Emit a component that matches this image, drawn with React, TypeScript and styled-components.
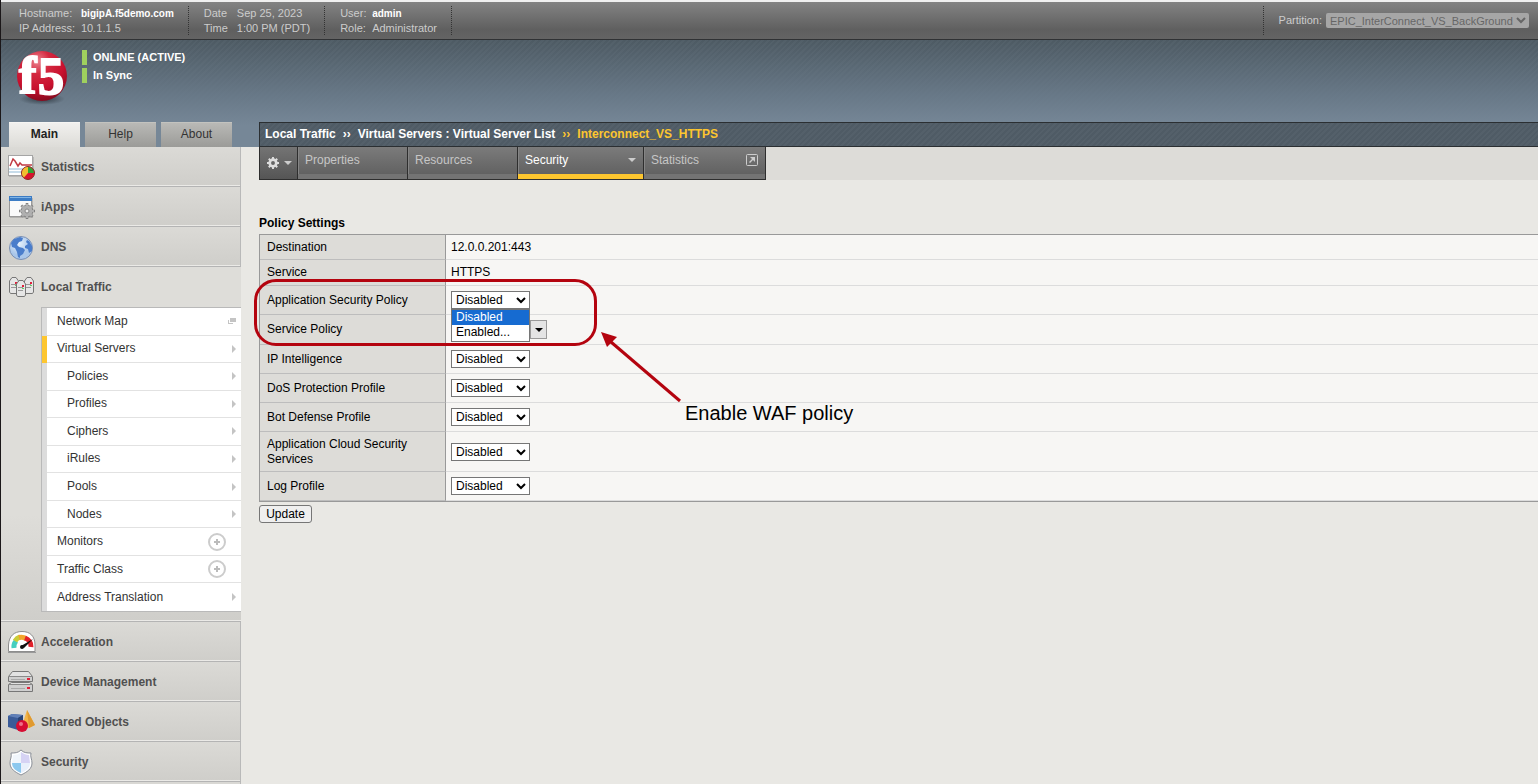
import React, { ReactNode } from "react";
import styled, { createGlobalStyle } from "styled-components";

const GlobalStyle = createGlobalStyle`
  *, *::before, *::after { box-sizing: border-box; }
  html, body { margin: 0; padding: 0; }
  body { font-family: "Liberation Sans", Arial, sans-serif; font-size: 12px; line-height: 15px; color: #000; background: #e9e8e4; }
  button, input, select { font: inherit; }
  ul { list-style: none; margin: 0; padding: 0; }
  a { color: inherit; text-decoration: none; }
`;

const Page = styled.div`
  min-height: 100vh;
  display: flex;
  flex-direction: column;
  border-left: 1px solid #1b1719;
`;

/* ---------- top bar ---------- */
const TopBar = styled.header`
  display: flex;
  align-items: center;
  height: 40px;
  border-top: 2px solid #f0f0f0;
  border-bottom: 1px solid #303234;
  background: linear-gradient(#838383, #5f5f5f 75%, #646464);
  color: #ccc;
  font-size: 11px;
`;

const InfoGroup = styled.dl<{ $left: number; $label: number }>`
  display: grid;
  grid-template-columns: ${(p) => p.$label}px auto;
  align-content: center;
  margin: 0;
  height: 29px;
  padding: 0 14px 0 ${(p) => p.$left}px;
  border-right: 1px dotted #333;
  white-space: nowrap;
  dt, dd { margin: 0; }
`;

const Strong = styled.strong`
  color: #fff;
  font-size: 10px;
`;

const PartitionBox = styled.div`
  display: flex;
  align-items: center;
  gap: 4px;
  height: 29px;
  margin-left: auto;
  padding: 0 9px 0 15px;
  border-left: 1px dotted #333;
`;

const PartitionSelect = styled.select`
  width: 203px;
  height: 15px;
  padding: 0;
  border: 0;
  border-radius: 2px;
  background: #a6a6a6;
  color: #666;
  opacity: 1;
`;

/* ---------- banner ---------- */
const Banner = styled.div`
  display: flex;
  flex-direction: column;
  height: 107px;
  background:
    linear-gradient(rgba(77, 89, 97, 0) 0, rgba(108, 125, 141, 0.85) 55px, #768797 85px),
    repeating-linear-gradient(135deg, #4d5a63 0 2px, #525f68 2px 4px);
`;

const StatusRow = styled.div`
  display: flex;
  flex: 1;
  padding: 4px 0 0 14px;
  gap: 12px;
`;

const StatusList = styled.ul`
  display: flex;
  flex-direction: column;
  gap: 3px;
  padding-top: 6px;
  color: #fff;
  font-size: 11px;
  font-weight: bold;
  li { border-left: 5px solid #9fd05e; padding-left: 6px; }
`;

const HeadRow = styled.div`
  display: flex;
  height: 25px;
`;

const SideTabs = styled.nav`
  display: flex;
  gap: 5px;
  width: 258px;
  padding-left: 8px;
`;

const SideTab = styled.button<{ $active?: boolean }>`
  width: 71px;
  padding: 0 0 2px;
  border: 0;
  border-top: 1px solid ${(p) => (p.$active ? "#f6f5f3" : "#c3c3bf")};
  background: ${(p) => (p.$active ? "linear-gradient(#f1f0ee, #dddcd8)" : "linear-gradient(#b9b9b6, #9b9b98)")};
  color: ${(p) => (p.$active ? "#222" : "#333")};
  font-weight: ${(p) => (p.$active ? "bold" : "normal")};
`;

const Breadcrumb = styled.nav`
  flex: 1;
  display: flex;
  align-items: center;
  gap: 7px;
  padding-left: 5px;
  border: 1px solid #2b2f32;
  border-right: 0;
  background: repeating-linear-gradient(135deg, #4f5b65 0 2px, #54606a 2px 4px);
  color: #fff;
  font-weight: bold;
  white-space: nowrap;
`;

const Current = styled.span`
  color: #fdc62f;
`;

/* ---------- sidebar ---------- */
const Body = styled.div`
  flex: 1;
  display: flex;
`;

const Sidebar = styled.nav`
  display: flex;
  flex-direction: column;
  width: 240px;
  flex: none;
`;

const Filler = styled.div`
  flex: 1;
  background: #d9d8d4;
  border-right: 1px solid #b9b9b9;
`;

const NavItem = styled.a`
  display: flex;
  align-items: center;
  gap: 5px;
  height: 40px;
  padding: 2px 0 0 6px;
  border-right: 1px solid #b9b9b9;
  border-bottom: 1px solid #b4b4b4;
  box-shadow: inset 0 -1px #ebeae7;
  background: linear-gradient(#dbdad6, #cfceca);
  color: #505050;
  font-weight: bold;
  svg { flex: none; }
`;

const OpenSection = styled.div`
  padding-bottom: 8px;
  background: linear-gradient(#deddd9 0 70%, #cfceca);
  border-bottom: 1px solid #b4b4b4;
  box-shadow: inset 0 -1px #ebeae7;
`;

const OpenHead = styled(NavItem)`
  padding-top: 0;
  border: 0;
  box-shadow: none;
  background: none;
`;

const SubMenu = styled.ul`
  display: grid;
  grid-auto-rows: 1fr;
  min-height: 305px;
  margin: 0 0 1px 40px;
  border: 1px solid #b9b9b9;
  border-right: 0;
  background: #fff;
`;

const SubItem = styled.li<{ $active?: boolean; $nested?: boolean }>`
  display: flex;
  border-left: 5px solid ${(p) => (p.$active ? "#fdc62f" : "#dcdcdc")};
  a {
    flex: 1;
    display: flex;
    align-items: center;
    justify-content: space-between;
    padding: 0 5px 0 ${(p) => (p.$nested ? 20 : 10)}px;
    border-bottom: 1px solid #e2e2e2;
    color: #333;
  }
  &:last-child a { border-bottom: 0; }
`;

const PlusIcon = styled.svg`
  margin-right: 9px;
`;

/* ---------- main ---------- */
const Main = styled.main`
  flex: 1;
  min-width: 0;
  padding-left: 18px;
`;

const TabBand = styled.div`
  display: flex;
  height: 33px;
  background: #dddcd8;
`;

const TabStrip = styled.div`
  display: flex;
  border-left: 1px solid #2e2e2e;
  border-bottom: 1px solid #2e2e2e;
`;

const MainTab = styled.button<{ $width: number; $active?: boolean }>`
  display: flex;
  justify-content: space-between;
  width: ${(p) => p.$width}px;
  padding: 6px 7px 0;
  border: 0;
  border-right: 1px solid #2e2e2e;
  background: linear-gradient(#7b7b7b, #5d5d5d);
  box-shadow: inset 0 -5px ${(p) => (p.$active ? "#fdc62f" : "#747474")}, inset 1px 0 #858585;
  color: ${(p) => (p.$active ? "#fff" : "#c6c6c6")};
  line-height: 15px;
  svg { flex: none; }
`;

const GearTab = styled.button`
  display: flex;
  align-items: center;
  gap: 5px;
  width: 38px;
  padding: 0 5px 0 6px;
  border: 0;
  border-right: 1px solid #2e2e2e;
  background: linear-gradient(#747474, #555);
`;

const SectionTitle = styled.h2`
  margin: 36px 0 3px;
  font-size: 12px;
  line-height: 15px;
`;

const TableArea = styled.div`
  position: relative;
`;

const SettingsTable = styled.table`
  width: 100%;
  border-spacing: 0;
  border-top: 1px solid #999;
  border-left: 1px solid #999;
  border-bottom: 1px solid #999;
  background: #f7f6f4;
`;

const Row = styled.tr<{ $height: number }>`
  height: ${(p) => p.$height}px;
  th {
    width: 186px;
    padding: 0 30px 0 7px;
    border-right: 1px solid #999;
    border-bottom: 1px solid #bdbdbd;
    background: #dddcd8;
    font-weight: normal;
    text-align: left;
  }
  td {
    padding: 0 5px;
    border-bottom: 1px solid #dcdcdc;
  }
`;

const Control = styled.div`
  position: relative;
  display: flex;
  align-items: center;
`;

const Select = styled.select`
  width: 79px;
  height: 18px;
  padding: 0;
  border: 1px solid #767676;
  border-radius: 0;
  background: #fff;
  color: #000;
`;

const OptionList = styled.ul`
  position: absolute;
  z-index: 1;
  top: 17px;
  left: 0;
  width: 79px;
  height: 34px;
  border: 1px solid #767676;
  border-top-width: 2px;
  background: #fff;
`;

const Option = styled.li<{ $selected?: boolean }>`
  padding-left: 4px;
  background: ${(p) => (p.$selected ? "#166bd1" : "#fff")};
  color: ${(p) => (p.$selected ? "#fff" : "#000")};
`;

const PolicyInput = styled.input`
  width: 79px;
  height: 18px;
  border: 1px solid #767676;
`;

const ComboButton = styled.button`
  display: flex;
  align-items: center;
  justify-content: center;
  width: 17px;
  height: 19px;
  padding: 0;
  border: 1px solid #999;
  background: #e4e4e4;
`;

const UpdateButton = styled.button`
  display: block;
  width: 53px;
  height: 18px;
  margin-top: 3px;
  padding: 0;
  border: 1px solid #767676;
  border-radius: 3px;
  background: #efefef;
  color: #000;
`;

const Highlight = styled.div`
  position: absolute;
  z-index: 2;
  top: 45px;
  left: -5px;
  width: 343px;
  height: 67px;
  border: 3px solid #b4040f;
  border-radius: 22px;
  pointer-events: none;
`;

const Arrow = styled.svg`
  position: absolute;
  top: 96px;
  left: 340px;
`;

const Note = styled.p`
  position: absolute;
  top: 167px;
  left: 426px;
  margin: 0;
  font-size: 20px;
  line-height: 24px;
  white-space: nowrap;
`;

/* ---------- drawings ---------- */
const Logo = () => (
  <svg width="55" height="72" viewBox="0 -6 55 72" role="img" aria-label="f5">
    <defs>
      <radialGradient id="ball" cx="0.4" cy="0.2" r="0.85">
        <stop offset="0" stopColor="#eb8590" />
        <stop offset="0.3" stopColor="#d4283f" />
        <stop offset="0.65" stopColor="#c8102e" />
        <stop offset="1" stopColor="#7d0a1c" />
      </radialGradient>
      <radialGradient id="shade">
        <stop offset="0" stopColor="#222b33" stopOpacity="0.8" />
        <stop offset="1" stopColor="#222b33" stopOpacity="0" />
      </radialGradient>
    </defs>
    <ellipse cx="27" cy="49" rx="23" ry="6" fill="url(#shade)" />
    <circle cx="27" cy="26" r="25" fill="url(#ball)" />
    <g fill="#fff" stroke="#fff" strokeWidth="2" fontFamily="Liberation Serif, serif" fontWeight="bold">
      <text x="4" y="43" fontSize="52">f</text>
      <text x="23" y="44" fontSize="52">5</text>
    </g>
  </svg>
);

const Ico = ({ children }: { children: ReactNode }) => (
  <svg width="29" height="30" viewBox="0 0 29 30" aria-hidden="true">{children}</svg>
);

const StatisticsIcon = () => (
  <Ico>
    <rect x="2" y="4" width="25" height="20" fill="#999" opacity="0.5" />
    <rect x="1.500" y="2.500" width="24" height="20" fill="#fff" stroke="#a5a5a5" />
    <path d="M2 16h23M2 19h23" stroke="#c7dcea" strokeWidth="2" />
    <path d="M3 13l3-7 2 2 3 5 2-3 2 2h10" fill="none" stroke="#c13a43" strokeWidth="1.500" />
    <circle cx="21" cy="20" r="6.500" fill="#d8142e" stroke="#8a2a20" />
    <path d="M21 20V14a6 6 0 0 0-4 10.500z" fill="#f0c030" />
    <path d="M21 20V14a6 6 0 0 1 6 6z" fill="#2fa535" />
  </Ico>
);

const GearShape = ({ x, y, r, fill }: { x: number; y: number; r: number; fill: string }) => (
  <g transform={`translate(${x} ${y})`}>
    <circle r={r * 0.55} fill="none" stroke={fill} strokeWidth={r * 0.45} />
    {[0, 45, 90, 135].map((a) => (
      <path key={a} transform={`rotate(${a})`} d={`M0 ${-r}V${-r * 0.6}M0 ${r * 0.6}V${r}`} stroke={fill} strokeWidth={r * 0.32} />
    ))}
  </g>
);

const AppsIcon = () => (
  <Ico>
    <rect x="3" y="5" width="23" height="20" fill="#888" opacity="0.4" />
    <rect x="2.500" y="3.500" width="22" height="20" fill="#fafafa" stroke="#999" />
    <path d="M2 3h23v5H2z" fill="#3c7cc4" />
    <path d="M3 4h21v1H3z" fill="#7fb4e6" />
    <GearShape x={20} y={18} r={8} fill="#808080" />
    <circle cx="20" cy="18" r="5" fill="#b4b4b4" />
    <GearShape x={20} y={18} r={7} fill="#b0b0b0" />
    <circle cx="20" cy="18" r="2" fill="#eee" stroke="#888" />
  </Ico>
);

const DnsIcon = () => (
  <Ico>
    <defs>
      <radialGradient id="globe" cx="0.4" cy="0.3"><stop offset="0" stopColor="#e9f3fd" /><stop offset="1" stopColor="#a9c6ea" /></radialGradient>
    </defs>
    <circle cx="14" cy="15" r="11.500" fill="url(#globe)" stroke="#7a8fb3" />
    <path d="M4 10l3-4 6-2 3 1-1 3-3 1-2 3 2 2 4 1 2 2-2 4-3 2v2l-2-1-1-5-2-4-3-1z" fill="#4a7dcb" />
    <path d="M20 7l2 1 3 5v5l-3 2-1-4-3-1v-2l3-2-2-2z" fill="#4a7dcb" />
  </Ico>
);

const Tower = ({ x, y }: { x: number; y: number }) => (
  <g transform={`translate(${x} ${y})`}>
    <path d="M.5 4L3 .5h4L9.500 4v11l-1 1.500h-7l-1-1.500z" fill="#e6e6e6" stroke="#777" />
    <path d="M2 7.500h5M2 10.500h5" stroke="#999" />
    <path d="M6 5h2v2H6z" fill="#e0203a" />
    <path d="M6 8h2v1H6z" fill="#6c6" />
  </g>
);

const TrafficIcon = () => (
  <Ico>
    <Tower x={2} y={5} />
    <Tower x={17} y={5} />
    <Tower x={9} y={8} />
  </Ico>
);

const AccelIcon = () => (
  <Ico>
    <path d="M1 24.500h28" stroke="#999" />
    <path d="M1.500 23.500V17C2 8 7 3.500 15 3.500s13 4.500 13 13.500v6.500z" fill="#fff" stroke="#8d8d8d" />
    <path d="M7 20a9 9 0 0 1 2-7" fill="none" stroke="#45cfc0" strokeWidth="5" />
    <path d="M8 13a9 9 0 0 1 5-4" fill="none" stroke="#c9cc3a" strokeWidth="5" />
    <path d="M12 9.500a9 9 0 0 1 7 1" fill="none" stroke="#f2a52c" strokeWidth="5" />
    <path d="M18 10a9 9 0 0 1 6 9" fill="none" stroke="#e0222c" strokeWidth="5" />
    <path d="M26 11L17 20l-3-2z" fill="#111" />
    <circle cx="15" cy="19" r="2" fill="#111" />
  </Ico>
);

const DeviceIcon = () => (
  <Ico>
    <path d="M1.500 8.500l4-5h16l4 5v5h-24z" fill="#e2e2e2" stroke="#777" />
    <path d="M1.500 16.500l3-2h18l3 2v7h-24z" fill="#e2e2e2" stroke="#777" />
    <path d="M2 9h23v4H2zM2 17h23v6H2z" fill="#cfcfcf" />
    <path d="M2 8.500h23M2 16.500h23" stroke="#8a8a8a" />
    <path d="M4 11.500h14M4 20.500h14" stroke="#aaa" />
    <path d="M20 10h3v2h-3zM20 19h3v2h-3z" fill="#e0203a" />
  </Ico>
);

const ObjectsIcon = () => (
  <Ico>
    <path d="M1 8l4-2 11 1v12l-5 3-10-3z" fill="#3a5b98" />
    <path d="M1 8l4-2 11 1-5 3z" fill="#6180b8" />
    <path d="M11 10l5-3v12l-5 3z" fill="#284376" />
    <path d="M20 2l8 15-6 3-7-2z" fill="#f3b548" />
    <path d="M20 2l8 15-6 3z" fill="#e09a30" />
    <circle cx="15" cy="18" r="6" fill="#d60d32" />
    <circle cx="14" cy="16" r="2" fill="#ee7088" />
  </Ico>
);

const ShieldIcon = () => (
  <Ico>
    <path d="M14 2c3 3 6 3 10 3-1 4 1 6 1 10 0 6-5 9-11 12C8 24 3 21 3 15c0-4 2-6 1-10 4 0 7 0 10-3z" fill="#fff" stroke="#8a8f98" />
    <path d="M14 4c3 2 5 3 8 3l1 8h-9z" fill="#d6d3f4" />
    <path d="M5 15h9v10c-5-2-9-5-9-10z" fill="#8cc8ee" />
    <path d="M14 15h9c0 5-4 8-9 10z" fill="#e9f0fb" />
    <path d="M6 7c4 0 6-1 8-3v11H5z" fill="#f0f5fb" />
  </Ico>
);

const Chevron = () => (
  <svg width="5" height="8" aria-hidden="true"><path d="M1 0l4 4-4 4z" fill="#c4c4c4" /></svg>
);
const WindowMark = () => (
  <svg width="8" height="6" aria-hidden="true"><path d="M2 0h6v4H2z M0 2h1v3h4v1H0z" fill="#c4c4c4" /></svg>
);
const Plus = () => (
  <PlusIcon width="20" height="20" viewBox="0 0 20 20" aria-hidden="true">
    <circle cx="10" cy="10" r="8" fill="none" stroke="#ccc" strokeWidth="2" />
    <path d="M7 10h6M10 7v6" stroke="#bbb" strokeWidth="2" />
  </PlusIcon>
);
const Down = ({ color }: { color: string }) => (
  <svg width="8" height="4" aria-hidden="true"><path d="M0 0h8L4 4z" fill={color} /></svg>
);

/* ---------- data ---------- */
type SubEntry = { label: string; nested?: boolean; active?: boolean; mark?: "window" | "plus" };

const subMenu: SubEntry[] = [
  { label: "Network Map", mark: "window" },
  { label: "Virtual Servers", active: true },
  { label: "Policies", nested: true },
  { label: "Profiles", nested: true },
  { label: "Ciphers", nested: true },
  { label: "iRules", nested: true },
  { label: "Pools", nested: true },
  { label: "Nodes", nested: true },
  { label: "Monitors", mark: "plus" },
  { label: "Traffic Class", mark: "plus" },
  { label: "Address Translation" },
];

const selectRows = [
  { id: "ip", label: "IP Intelligence", height: 29 },
  { id: "dos", label: "DoS Protection Profile", height: 29 },
  { id: "bot", label: "Bot Defense Profile", height: 29 },
  { id: "cloud", label: "Application Cloud Security Services", height: 40 },
  { id: "log", label: "Log Profile", height: 29 },
];

const DisabledSelect = ({ id }: { id: string }) => (
  <Select id={id} defaultValue="Disabled">
    <option>Disabled</option>
    <option>Enabled...</option>
  </Select>
);

export default function App() {
  return (
    <Page>
      <GlobalStyle />
      <TopBar>
        <InfoGroup $left={18} $label={62}>
          <dt>Hostname:</dt><dd><Strong>bigipA.f5demo.com</Strong></dd>
          <dt>IP Address:</dt><dd>10.1.1.5</dd>
        </InfoGroup>
        <InfoGroup $left={15} $label={33}>
          <dt>Date</dt><dd>Sep 25, 2023</dd>
          <dt>Time</dt><dd>1:00 PM (PDT)</dd>
        </InfoGroup>
        <InfoGroup $left={15} $label={32}>
          <dt>User:</dt><dd><Strong>admin</Strong></dd>
          <dt>Role:</dt><dd>Administrator</dd>
        </InfoGroup>
        <PartitionBox>
          <label htmlFor="partition">Partition:</label>
          <PartitionSelect id="partition" disabled>
            <option>EPIC_InterConnect_VS_BackGround</option>
          </PartitionSelect>
        </PartitionBox>
      </TopBar>

      <Banner>
        <StatusRow>
          <Logo />
          <StatusList>
            <li>ONLINE (ACTIVE)</li>
            <li>In Sync</li>
          </StatusList>
        </StatusRow>
        <HeadRow>
          <SideTabs>
            <SideTab $active>Main</SideTab>
            <SideTab>Help</SideTab>
            <SideTab>About</SideTab>
          </SideTabs>
          <Breadcrumb>
            <a href="#traffic">Local Traffic</a>
            <span>››</span>
            <a href="#servers">Virtual Servers : Virtual Server List</a>
            <Current>››</Current>
            <Current>Interconnect_VS_HTTPS</Current>
          </Breadcrumb>
        </HeadRow>
      </Banner>

      <Body>
        <Sidebar>
          <NavItem href="#statistics"><StatisticsIcon />Statistics</NavItem>
          <NavItem href="#iapps"><AppsIcon />iApps</NavItem>
          <NavItem href="#dns"><DnsIcon />DNS</NavItem>
          <OpenSection>
            <OpenHead href="#traffic"><TrafficIcon />Local Traffic</OpenHead>
            <SubMenu>
              {subMenu.map((s) => (
                <SubItem key={s.label} $active={s.active} $nested={s.nested}>
                  <a href="#item">
                    {s.label}
                    {s.mark === "plus" ? <Plus /> : s.mark === "window" ? <WindowMark /> : <Chevron />}
                  </a>
                </SubItem>
              ))}
            </SubMenu>
          </OpenSection>
          <NavItem href="#acceleration"><AccelIcon />Acceleration</NavItem>
          <NavItem href="#devices"><DeviceIcon />Device Management</NavItem>
          <NavItem href="#objects"><ObjectsIcon />Shared Objects</NavItem>
          <NavItem href="#security"><ShieldIcon />Security</NavItem>
          <Filler />
        </Sidebar>

        <Main>
          <TabBand>
            <TabStrip>
              <GearTab aria-label="Options">
                <svg width="14" height="14" aria-hidden="true"><GearShape x={7} y={7} r={6} fill="#ddd" /></svg>
                <Down color="#ccc" />
              </GearTab>
              <MainTab $width={110}>Properties</MainTab>
              <MainTab $width={110}>Resources</MainTab>
              <MainTab $width={126} $active>
                Security
                <svg width="8" height="15" aria-hidden="true"><path d="M0 5h8l-4 4z" fill="#ccc" /></svg>
              </MainTab>
              <MainTab $width={122}>
                Statistics
                <svg width="12" height="15" viewBox="0 0 12 15" aria-hidden="true">
                  <rect x="0.500" y="1.500" width="11" height="11" rx="1" fill="none" stroke="#ccc" />
                  <path d="M4 4h5v5L7 7l-3 3-1-1 3-3z" fill="#ccc" />
                </svg>
              </MainTab>
            </TabStrip>
          </TabBand>

          <SectionTitle>Policy Settings</SectionTitle>
          <TableArea>
            <SettingsTable>
              <tbody>
                <Row $height={25}><th scope="row">Destination</th><td>12.0.0.201:443</td></Row>
                <Row $height={26}><th scope="row">Service</th><td>HTTPS</td></Row>
                <Row $height={29}>
                  <th scope="row"><label htmlFor="asp">Application Security Policy</label></th>
                  <td>
                    <Control>
                      <DisabledSelect id="asp" />
                      <OptionList role="listbox" aria-label="Application Security Policy">
                        <Option role="option" aria-selected $selected>Disabled</Option>
                        <Option role="option" aria-selected={false}>Enabled...</Option>
                      </OptionList>
                    </Control>
                  </td>
                </Row>
                <Row $height={30}>
                  <th scope="row"><label htmlFor="service-policy">Service Policy</label></th>
                  <td>
                    <Control>
                      <PolicyInput id="service-policy" />
                      <ComboButton aria-label="Choose service policy"><Down color="#000" /></ComboButton>
                    </Control>
                  </td>
                </Row>
                {selectRows.map((r) => (
                  <Row key={r.id} $height={r.height}>
                    <th scope="row"><label htmlFor={r.id}>{r.label}</label></th>
                    <td><Control><DisabledSelect id={r.id} /></Control></td>
                  </Row>
                ))}
              </tbody>
            </SettingsTable>
            <Highlight />
            <Arrow width="84" height="76" viewBox="0 0 84 76" aria-hidden="true">
              <path d="M81 71L12 12" stroke="#b4040f" strokeWidth="3" />
              <path d="M2 2l16 5-10 10z" fill="#b4040f" />
            </Arrow>
            <Note>Enable WAF policy</Note>
          </TableArea>
          <UpdateButton>Update</UpdateButton>
        </Main>
      </Body>
    </Page>
  );
}
